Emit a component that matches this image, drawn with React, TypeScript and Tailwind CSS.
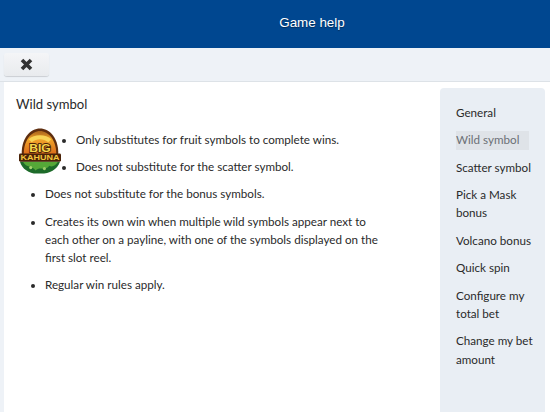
import React from 'react';

const navItems = [
  { label: ['General'] },
  { label: ['Wild symbol'], active: true },
  { label: ['Scatter symbol'] },
  { label: ['Pick a Mask', 'bonus'] },
  { label: ['Volcano bonus'] },
  { label: ['Quick spin'] },
  { label: ['Configure my', 'total bet'] },
  { label: ['Change my bet', 'amount'] },
];

// Small drawing of the game logo
const GameLogo = () => (
  <svg width="42" height="47" viewBox="0 0 43 47" className="block">
    <defs>
      <linearGradient id="dome" x1="0" y1="0" x2="0" y2="1">
        <stop offset="0" stopColor="#a8641c" />
        <stop offset="0.35" stopColor="#f0a32a" />
        <stop offset="1" stopColor="#d9641a" />
      </linearGradient>
    </defs>
    <path d="M1 34 C3 42 12 47 20 46 C29 47 39 43 42 34 Z" fill="#1d6b2a" />
    <path d="M4 34 C8 41 13 37 17 43 C21 38 27 44 31 38 C34 40 37 38 40 34 Z" fill="#55a838" />
    <circle cx="12" cy="40" r="1.6" fill="#a6d46e" />
    <circle cx="26" cy="41" r="1.6" fill="#9ccb68" />
    <path d="M3 30 C1 10 12 0 21.500 0 C31 0 42 10 40 30 Z" fill="#5e2d0e" />
    <path d="M5 28 C4 12 13 2.500 21.500 2.500 C30 2.500 39 12 38 28 Z" fill="url(#dome)" />
    <path d="M10 11 C15 5.500 28 5.500 33 11 L30 14 C25 10 18 10 13 14 Z" fill="#f8d455" />
    <text x="21.500" y="24.500" textAnchor="middle" fontFamily="Liberation Sans, sans-serif" fontWeight="700" fontSize="12" fill="#f7d64a" stroke="#4a2208" strokeWidth="1.800" paintOrder="stroke" textLength="22" lengthAdjust="spacingAndGlyphs">BIG</text>
    <rect x="0" y="25.500" width="43" height="8.500" rx="1.500" fill="#4a2208" />
    <text x="21.500" y="32.600" textAnchor="middle" fontFamily="Liberation Sans, sans-serif" fontWeight="700" fontSize="8" fill="#f2c53e" textLength="40" lengthAdjust="spacingAndGlyphs">KAHUNA</text>
  </svg>
);

const App: React.FC = () => {
  return (
    <div className="flex flex-col w-[550px] h-[412px] overflow-hidden bg-[#eef2f7] font-['Lato',sans-serif] text-[11.65px] text-[#2a2a2a]">
      {/* Title bar */}
      <div className="h-[48px] shrink-0 flex items-center justify-center pl-[74px] pb-[1px] bg-[#004790] text-white text-[13.4px] font-['Liberation_Sans',sans-serif] [text-shadow:0_1px_1px_rgba(0,0,0,0.4)]">
        Game help
      </div>

      {/* Toolbar */}
      <div className="h-[34px] shrink-0 pl-[4px] pt-[5px] border-b border-[#dde2e7]">
        <button className="flex items-center justify-center w-[45px] h-[23px] rounded-[3px] bg-gradient-to-b from-[#f4f5f7] to-[#e9ebee] shadow-[0_1px_1px_rgba(0,0,0,0.15)]">
          <svg width="15" height="15" viewBox="0 0 15 15">
            <path d="M3 3 L12 12 M12 3 L3 12" stroke="#333" strokeWidth="3.600" />
          </svg>
        </button>
      </div>

      {/* Content */}
      <div className="flex flex-1 min-h-0 ml-[4px] bg-white">
        <div className="w-[436px] shrink-0 pl-[12px] pt-[12px]">
          <h1 className="text-[13.1px] leading-[20px]">Wild symbol</h1>
          <div className="mt-[14px] pr-[60px]">
            <div className="float-left w-[60px] h-[48px] pl-[3px]">
              <GameLogo />
            </div>
            <ul className="list-disc pl-[29px] pt-[3px] leading-[18.2px] [&>li]:mb-[9px]">
              <li>Only substitutes for fruit symbols to complete wins.</li>
              <li>Does not substitute for the scatter symbol.</li>
              <li>Does not substitute for the bonus symbols.</li>
              <li>Creates its own win when multiple wild symbols appear next to each other on a payline, with one of the symbols displayed on the first slot reel.</li>
              <li>Regular win rules apply.</li>
            </ul>
          </div>
        </div>

        {/* Side menu */}
        <nav className="w-[105px] shrink-0 mt-[6px] rounded-t-[4px] bg-[#e9eef4] pt-[16px] px-[16px] flex flex-col gap-[9.1px]">
          {navItems.map((item) => (
            <div
              key={item.label[0]}
              className={item.active ? 'bg-[#dfe3e8] text-[#6b7076] leading-[18.3px]' : 'leading-[18.3px]'}
            >
              {item.label.map((line) => (
                <div key={line} className="whitespace-nowrap">{line}</div>
              ))}
            </div>
          ))}
        </nav>
      </div>
    </div>
  );
};

export default App;
